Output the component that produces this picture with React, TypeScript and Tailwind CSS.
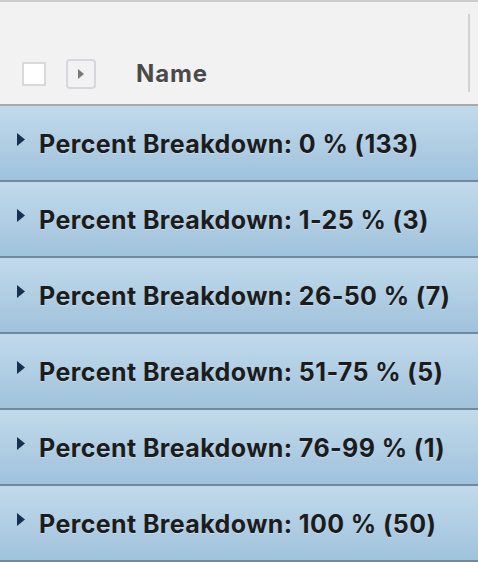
import React from 'react';

const groups = [
  { label: '0 %', count: 133 },
  { label: '1-25 %', count: 3 },
  { label: '26-50 %', count: 7 },
  { label: '51-75 %', count: 5 },
  { label: '76-99 %', count: 1 },
  { label: '100 %', count: 50 },
];

const App = () => {
  return (
    <div className="w-[478px] h-[562px] overflow-hidden bg-[#f2f2f2] font-['Inter',_'Liberation_Sans',_sans-serif]">
      {/* header */}
      <div className="h-[106px] border-t-2 border-b-2 border-t-[#cccccc] border-b-[#a9a9a9] bg-[#f2f2f2] flex items-stretch">
        <div className="flex-1 flex items-end pb-[18px] pl-[22px]">
          <span className="w-[24px] h-[24px] border-2 border-[#d9d9d9] bg-white" />
          <button className="ml-[20px] mb-[-3px] w-[30px] h-[30px] rounded-[4px] border-2 border-[#d4d8dc] bg-[#f2f2f2] flex items-center justify-center">
            <svg width="8" height="10" viewBox="0 0 8 10">
              <path d="M1 0 L7 5 L1 10 Z" fill="#7a7a7a" />
            </svg>
          </button>
          <span className="ml-[40px] text-[24px] leading-[24px] font-bold tracking-[0.9px] text-[#4a4a4a] [text-shadow:0_1px_0_#ffffff]">
            Name
          </span>
        </div>
        <div className="w-[2px] bg-[#d2d2d2] my-[12px] mr-[8px]" />
      </div>

      {groups.map((g) => (
        <div
          key={g.label}
          className="h-[76px] border-b-2 border-[#72899b] bg-gradient-to-b from-[#c1daeb] to-[#a0c2dc] flex items-center pl-[17px]"
        >
          <svg width="8" height="13" viewBox="0 0 8 13" className="mb-[8px]">
            <path d="M0 0 L8 6.5 L0 13 Z" fill="#17304f" />
          </svg>
          <span className="ml-[14px] mt-[4px] text-[25px] font-bold text-[#1c1c1c] tracking-[0.4px] [text-shadow:0_1px_0_rgba(255,255,255,0.35)]">
            Percent Breakdown: {g.label} ({g.count})
          </span>
        </div>
      ))}
    </div>
  );
};

export default App;
